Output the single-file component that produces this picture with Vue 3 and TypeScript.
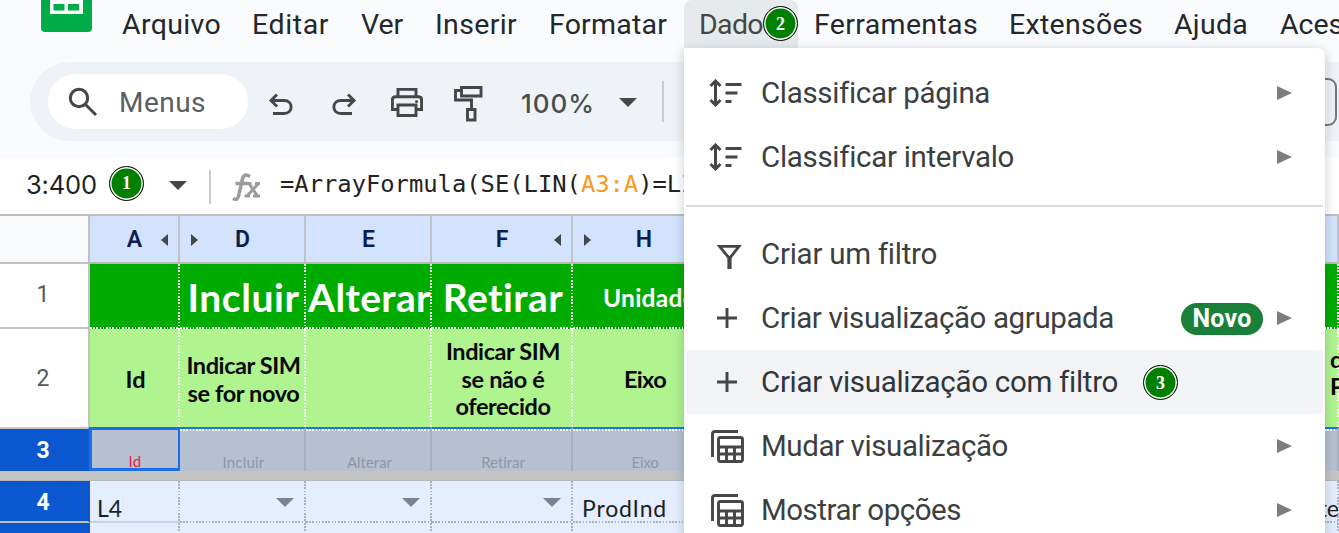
<script setup lang="ts">
import type { Directive } from 'vue'

// Tracks a single-line label so that it takes up the given width in pixels.
const vFit: Directive<HTMLElement, number> = {
  mounted(el, { value }) {
    const natural = el.getBoundingClientRect().width
    const count = (el.textContent ?? '').length
    if (value && count) el.style.letterSpacing = `${(value - natural) / count}px`
  },
}

interface Tab { label: string; width: number; active?: boolean }
const tabs: Tab[] = [
  { label: 'Arquivo', width: 99 },
  { label: 'Editar', width: 77 },
  { label: 'Ver', width: 42 },
  { label: 'Inserir', width: 82 },
  { label: 'Formatar', width: 118 },
  { label: 'Dados', width: 78, active: true },
  { label: 'Ferramentas', width: 164 },
  { label: 'Extensões', width: 134 },
  { label: 'Ajuda', width: 74 },
  { label: 'Acessibilidade', width: 184 },
]

interface Entry { icon: string; label: string; width: number; arrow?: boolean; isNew?: boolean; hot?: boolean }
const sortEntries: Entry[] = [
  { icon: 'sort', label: 'Classificar página', width: 228, arrow: true },
  { icon: 'sort', label: 'Classificar intervalo', width: 252, arrow: true },
]
const filterEntries: Entry[] = [
  { icon: 'funnel', label: 'Criar um filtro', width: 175 },
  { icon: 'plus', label: 'Criar visualização agrupada', width: 353, arrow: true, isNew: true },
  { icon: 'plus', label: 'Criar visualização com filtro', width: 356, hot: true },
  { icon: 'views', label: 'Mudar visualização', width: 247, arrow: true },
  { icon: 'views', label: 'Mostrar opções', width: 200, arrow: true },
]
const groups = [sortEntries, filterEntries]
</script>

<template>
  <div class="app">
    <nav class="menubar">
      <svg class="logo" width="51" height="33" viewBox="0 0 51 33">
        <path d="M0 -6H51V28Q51 32 47 32H4Q0 32 0 28Z" fill="#00ac47" />
        <path d="M9 -6H42V14H9Z" fill="#fff" />
        <path d="M12.500 -4H23.500V0H12.500ZM27 -4H38V0H27ZM12.500 4H23.500V10.500H12.500ZM27 4H38V10.500H27Z" fill="#00ac47" />
      </svg>
      <span v-for="t in tabs" :key="t.label" class="tab" :class="{ active: t.active }">
        <span v-fit="t.width">{{ t.label }}</span>
        <b v-if="t.active" class="step on-tab">2</b>
      </span>
    </nav>

    <div class="toolbar">
      <div class="search">
        <svg width="30" height="30" viewBox="0 0 30 30" fill="none" stroke="#444746" stroke-width="3">
          <circle cx="11" cy="11" r="8.700" /><path d="M17.500 17.500L28 28" />
        </svg>
        <span v-fit="87">Menus</span>
      </div>
      <svg class="tool undo" width="26" height="24" viewBox="0 0 26 24" fill="none" stroke="#444746" stroke-width="2.900">
        <path d="M9 1.500L3 7.500L9 13.500M3.500 7.500H16C25.500 7.500 25.500 20.500 16 20.500H5" />
      </svg>
      <svg class="tool redo" width="26" height="24" viewBox="0 0 26 24" fill="none" stroke="#444746" stroke-width="2.900">
        <path d="M16 1.500L22 7.500L16 13.500M21.500 7.500H9C-.5 7.500 -.5 20.500 9 20.500H20" />
      </svg>
      <svg class="tool print" width="32" height="29" viewBox="0 0 32 29" fill="none" stroke="#444746" stroke-width="2.900">
        <path d="M7 8.500V1.400H25V8.500M7 21.500H1.400V12Q1.400 8.800 4.500 8.800H27.500Q30.600 8.800 30.600 12V21.500H25M7 17H25V27.500H7Z" />
        <circle cx="25.500" cy="13.500" r="1.500" fill="#444746" stroke="none" />
      </svg>
      <svg class="tool roller" width="30" height="36" viewBox="0 0 30 36" fill="none" stroke="#444746" stroke-width="2.900">
        <path d="M7.500 1.500H27V10H7.500ZM7.500 4.500H1.500V14H17.500V23M13.500 23.500H21V34H13.500Z" />
      </svg>
      <span class="zoom"><span v-fit="74">100%</span></span>
      <i class="caret"></i>
      <i class="rule"></i>
      <div class="font-box"></div>
    </div>

    <div class="formula">
      <span class="range"><span v-fit="71">3:400</span></span>
      <b class="step">1</b>
      <i class="caret"></i>
      <i class="rule"></i>
      <svg class="fx" width="29" height="29" viewBox="0 0 29 29" fill="none" stroke="#999c9b" stroke-width="3.500">
        <path d="M18 3.500Q12 -.5 10.500 6L6.500 23Q5.500 28 1 25.500M3.500 10.500H15" />
        <path d="M14 10.500H19.500M23 10.500H28M12.500 23H18M21 23H28M17 10.500L25.500 23M26.500 10.500L15 23" stroke-width="3" />
      </svg>
      <code>=ArrayFormula(SE(LIN(<em>A3:A</em>)=LIN(</code>
    </div>

    <section class="sheet">
      <div class="row letters">
        <div class="head"></div>
        <div class="cell a">A<i class="prev"></i></div>
        <div class="cell d"><i class="next"></i>D</div>
        <div class="cell e">E</div>
        <div class="cell f">F<i class="prev"></i></div>
        <div class="cell h"><i class="next"></i>H</div>
        <div class="cell rest"></div>
      </div>
      <div class="row r1">
        <div class="head">1</div>
        <div class="cell a"></div>
        <div class="cell d"><span v-fit="112">Incluir</span></div>
        <div class="cell e"><span v-fit="123">Alterar</span></div>
        <div class="cell f"><span v-fit="121">Retirar</span></div>
        <div class="cell h"><span v-fit="93">Unidade</span></div>
        <div class="cell rest"></div>
      </div>
      <div class="row r2">
        <div class="head">2</div>
        <div class="cell a"><span v-fit="20">Id</span></div>
        <div class="cell d"><span v-fit="114">Indicar SIM</span><span v-fit="112">se for novo</span></div>
        <div class="cell e"></div>
        <div class="cell f"><span v-fit="114">Indicar SIM</span><span v-fit="83">se não é</span><span v-fit="95">oferecido</span></div>
        <div class="cell h"><span v-fit="42">Eixo</span></div>
        <div class="cell rest"><span>d</span><span>P</span></div>
      </div>
      <div class="row r3">
        <div class="head">3</div>
        <div class="cell a"><span v-fit="13">Id</span></div>
        <div class="cell d"><span v-fit="42">Incluir</span></div>
        <div class="cell e"><span v-fit="45">Alterar</span></div>
        <div class="cell f"><span v-fit="44">Retirar</span></div>
        <div class="cell h"><span v-fit="27">Eixo</span></div>
        <div class="cell rest"></div>
      </div>
      <div class="freeze"></div>
      <div class="row r4">
        <div class="head">4</div>
        <div class="cell a"><span v-fit="25">L4</span></div>
        <div class="cell d"><i class="drop"></i></div>
        <div class="cell e"><i class="drop"></i></div>
        <div class="cell f"><i class="drop"></i></div>
        <div class="cell h"><span v-fit="85">ProdInd</span></div>
        <div class="cell rest"><span>te</span></div>
      </div>
      <div class="row r4 r5">
        <div class="head"></div>
        <div class="cell a"></div><div class="cell d"></div><div class="cell e"></div>
        <div class="cell f"></div><div class="cell h"></div><div class="cell rest"></div>
      </div>
    </section>

    <aside class="menu">
      <div v-for="(g, n) in groups" :key="n" class="group">
        <div v-for="m in g" :key="m.label" class="entry" :class="{ hot: m.hot }">
          <span class="icon">
            <svg v-if="m.icon === 'sort'" width="34" height="28" viewBox="0 0 34 28" fill="none" stroke="#444746" stroke-width="3">
              <path d="M6.500 2V26M1.500 7L6.500 2L11.500 7M1.500 21L6.500 26L11.500 21M16.500 5.500H32.500M16.500 14H28.500M16.500 22.500H22.500" />
            </svg>
            <svg v-else-if="m.icon === 'funnel'" class="funnel" width="25" height="25" viewBox="0 0 25 25" fill="none" stroke="#444746">
              <path d="M2.500 2.400H22L12.500 14.500Z" stroke-width="2.800" /><path d="M12.500 12V25" stroke-width="4.200" />
            </svg>
            <svg v-else-if="m.icon === 'plus'" class="plus" width="20" height="20" viewBox="0 0 20 20" stroke="#444746" stroke-width="2.900">
              <path d="M10 0V20M0 10H20" />
            </svg>
            <svg v-else class="views" width="33" height="33" viewBox="0 0 33 33" fill="none" stroke="#444746" stroke-width="2.900">
              <path d="M1.500 27V4Q1.500 1.500 4 1.500H27" />
              <rect x="7.500" y="7.500" width="24" height="24" rx="2" />
              <path d="M7.500 17H31.500M7.500 24H31.500M15.500 17V31.500M23.500 17V31.500" />
            </svg>
          </span>
          <span v-fit="m.width" class="label">{{ m.label }}</span>
          <b v-if="m.hot" class="step">3</b>
          <span v-if="m.isNew" class="new"><span v-fit="59">Novo</span></span>
          <i v-if="m.arrow" class="sub"></i>
        </div>
      </div>
    </aside>
  </div>
</template>

<style>
body { margin: 0; overflow: hidden; }
</style>

<style scoped>
.app { position: relative; width: 1339px; height: 533px; overflow: hidden; background: #f9fbfd; font-family: Roboto, sans-serif; }
.app * { box-sizing: border-box; }
.app svg { display: block; flex: none; }
span { white-space: pre; }

.menubar { display: grid; grid-template-columns: 122px 130px 109px 74px 114px 135px 130px 195px 165px 106px 200px; height: 62px; color: #24272b; font-size: 28.500px; }
.logo { margin-left: 41px; }
.tab { height: 48px; line-height: 49px; }
.tab.active { width: 114px; padding-left: 15px; border-radius: 8px 8px 0 0; background: #e6eaed; color: #444746; position: relative; }
.step { display: flex; align-items: center; justify-content: center; flex: none; width: 35px; height: 35px; border: 1.500px solid #111; border-radius: 50%; background: #008000; box-shadow: inset 0 0 0 1.500px #fff; color: #fff; font: bold 18px/1 "Liberation Serif", serif; }
.on-tab { position: absolute; left: 79px; top: 6px; }

.toolbar { display: flex; align-items: center; position: relative; width: 1400px; height: 79px; margin-left: 30px; padding-left: 18px; border-radius: 40px; background: #eff3f8; }
.search { display: flex; align-items: center; width: 200px; height: 55px; padding-left: 20px; border-radius: 28px; background: #fff; color: #5b5e5f; font-size: 28px; }
.search > span { margin: 1px 0 0 21px; }
.undo { margin: 6px 0 0 20px; }
.redo { margin: 6px 0 0 38px; }
.print { margin: 1px 0 0 33px; }
.roller { margin: 4px 0 0 31px; }
.zoom { width: 75px; margin: 3px 0 0 37px; color: #4a4d4d; font: 500 26px Inter, sans-serif; }
.caret { border: 9px solid transparent; border-top: 9px solid #444746; border-bottom: 0; }
.toolbar .caret { margin: 2px 0 0 23px; }
.toolbar .rule { width: 2px; height: 41px; margin: 0 0 0 25px; background: #c9cdd1; }
.font-box { width: 200px; height: 48px; margin-left: 473px; border: 2px solid #747775; border-radius: 9px; }

.formula { display: flex; align-items: center; height: 57px; margin-top: 16px; padding-left: 26px; background: #fff; }
.range { width: 83px; margin-top: -3px; color: #1f1f1f; font: 25.500px Inter, sans-serif; }
.formula .step { margin-top: -5px; }
.formula .caret { margin-left: 25px; }
.formula .rule { width: 2px; height: 34px; margin: 2px 0 0 22px; background: #c7c9cb; }
.fx { margin: 3px 0 0 21px; }
code { margin: -4px 0 0 19px; color: #222; font: 23.800px "DejaVu Sans Mono", monospace; white-space: pre; }
code em { color: #fa9a25; font-style: normal; }

.sheet { font-family: Lato, sans-serif; }
.row { display: flex; width: 1339px; }
.head, .cell { display: flex; flex: none; align-items: center; justify-content: center; overflow: hidden; }
.head { width: 90px; padding-right: 2px; border-right: 2px solid #c0c2c4; border-bottom: 2px solid #c0c2c4; background: #fff; font: 23px Roboto, sans-serif; color: #55595c; }
.a { width: 90px; } .d, .e { width: 126px; } .f { width: 141px; } .h { width: 143px; } .rest { flex: 1; }

.letters { height: 50px; border-top: 2px solid #bfbfbb; }
.letters .head { background: #f8f9fa; }
.letters .cell { position: relative; padding-left: 1px; border-right: 2px solid #c0c4c8; border-bottom: 2px solid #b8bab4; background: #d3e2fd; color: #0b1d4e; font: 600 23px Roboto, sans-serif; }
.prev, .next { position: absolute; top: 18px; border: 6px solid transparent; }
.prev { right: 10px; border-right: 7px solid #444746; border-left: 0; }
.next { left: 11px; border-left: 7px solid #444746; border-right: 0; }

.r1 .cell, .r2 .cell { padding-left: 1px; background-repeat: no-repeat, no-repeat; background-position: right top, left bottom; background-size: 2px 100%, 100% 2px; background-image: repeating-linear-gradient(180deg, #fff 0 1.600px, transparent 1.600px 3.200px), repeating-linear-gradient(90deg, #fff 0 1.600px, transparent 1.600px 3.200px); }
.r1 { height: 65px; }
.r1 .head { padding-bottom: 3px; }
.r1 .cell { background-color: #00ab00; color: #fff; font-size: 39px; font-weight: 700; }
.r1 .h { justify-content: flex-start; padding: 2px 0 0 30px; font-size: 24.500px; }
.r2 { height: 98px; }
.r2 .head { border-bottom: 0; }
.r2 .cell { flex-direction: column; background-color: #b0f48f; background-size: 2px 100%, 0 0; color: #080808; font-size: 23.500px; font-weight: 700; line-height: 27.500px; padding-top: 3px; }
.r2 .rest { align-items: flex-end; padding: 0 0 10px; }
.r2 .rest span { width: 9px; }

.r3 { position: relative; height: 44px; }
.r3 .head, .r4 .head { border-right-color: #0b57d0; background: #0b57d0; color: #fff; font-weight: 700; }
.r3 .head { border-top: 2px solid #c8c8c8; border-bottom: 0; }
.r3 .cell { align-items: flex-end; padding-left: 3px; border-top: 2px solid #1a73e8; border-right: 2px solid #a6afbe; background: repeating-linear-gradient(90deg, #fff 0 1.600px, #b6c0d0 1.600px 3.200px) left top / 100% 2px no-repeat #b6c0d0; color: #8e97a6; font-size: 15px; line-height: 17px; }
.r3 .cell.a { width: 92px; margin: 0 -1px 0 -1px; padding-left: 0; border: 3px solid #1a6fe8; background: #b6c0d0; color: #e9233f; line-height: 13px; }
.freeze { height: 10px; background: #c4c4c4; border-bottom: 1px solid #b4b6ba; }

.r4 { height: 42px; }
.r4 .head { padding-top: 2px; }
.r4 .cell { background: repeating-linear-gradient(180deg, #a9b1bf 0 1.600px, transparent 1.600px 3.200px) right top / 2px 100% no-repeat, repeating-linear-gradient(90deg, #a9b1bf 0 1.600px, transparent 1.600px 3.200px) left bottom / 100% 2px no-repeat #e5eefe; color: #1c1f24; font-size: 23px; }
.r4 .a, .r4 .h { justify-content: flex-start; padding: 12px 0 0 7px; }
.r4 .a { background: repeating-linear-gradient(180deg, #a9b1bf 0 1.600px, transparent 1.600px 3.200px) right top / 2px 100% no-repeat, linear-gradient(#cbd3e0, #cbd3e0) left bottom / 100% 2px no-repeat #e5eefe; }
.r4 .h { padding-left: 9px; }
.r4 .rest { justify-content: flex-end; padding: 12px 0 0; }
.drop { align-self: flex-start; margin: 17px 12px 0 auto; border: 9px solid transparent; border-top: 9px solid #7b838f; border-bottom: 0; }

.menu { position: absolute; left: 684px; top: 48px; width: 641px; height: 520px; padding-top: 13px; border-radius: 0 8px 8px 8px; background: #fff; box-shadow: 0 3px 12px rgba(40, 50, 65, .25); }
.group + .group { margin-top: 16px; padding-top: 15px; border-top: 2px solid #dadce0; }
.group { margin-left: 2px; margin-right: 2px; }
.entry { display: flex; align-items: center; height: 64px; padding-right: 31px; color: #3c3f41; font-size: 29.500px; }
.label { margin: -1px 0 0; }
.hot { background: #f1f3f4; color: #30353b; }
.icon { width: 75px; padding-left: 23px; }
.funnel { margin: 4px 0 0 8px; }
.plus { margin-left: 8px; }
.views { margin: 0 0 0 2px; }
.entry .step { margin: 1px 0 0 25px; }
.new { display: flex; align-items: center; justify-content: center; width: 82px; height: 32px; margin: 1px 14px 0 auto; border-radius: 16px; background: #188038; color: #fff; font-size: 25px; font-weight: 700; }
.sub { margin: -1px 0 0 auto; border: 7px solid transparent; border-left: 15px solid #7d7d7d; border-right: 0; }
.new + .sub { margin-left: 0; }
</style>
